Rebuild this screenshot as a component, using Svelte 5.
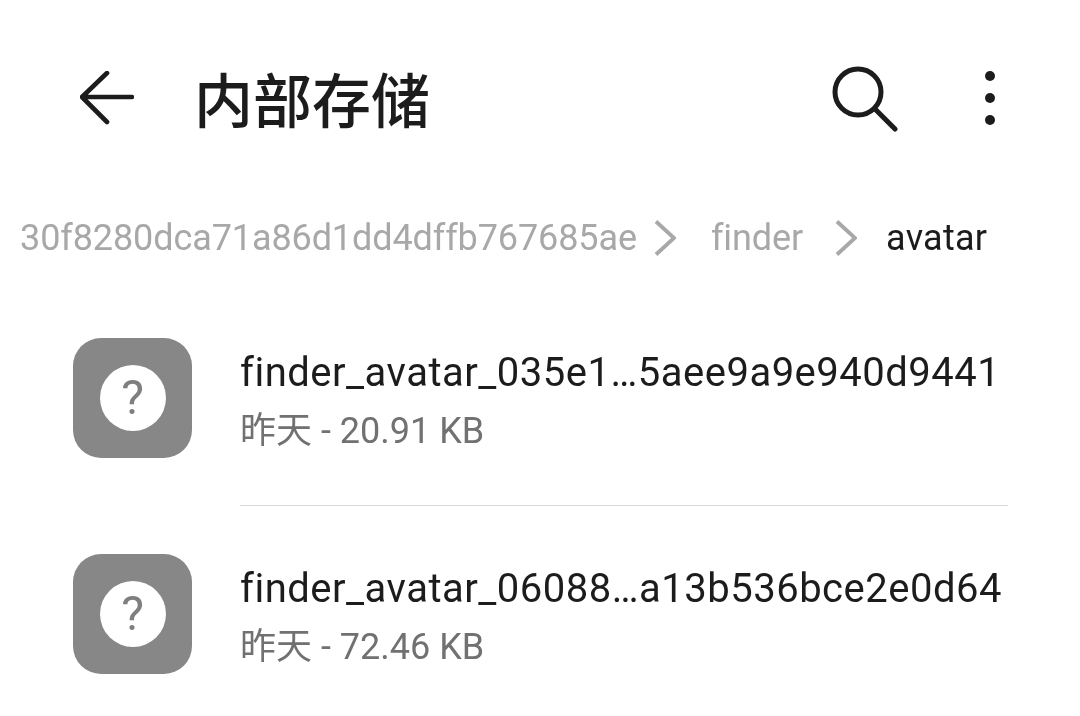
<script>
  const crumbs = [
    { label: "30f8280dca71a86d1dd4dffb767685ae", before: 17, after: 35 },
    { label: "finder", before: 32, after: 29 },
  ];
  const files = [
    { name: "finder_avatar_035e1…5aee9a9e940d9441", meta: "昨天 - 20.91 KB" },
    { name: "finder_avatar_06088…a13b536bce2e0d64", meta: "昨天 - 72.46 KB" },
  ];
</script>

<div class="screen">
  <header class="toolbar">
    <svg class="back" width="54" height="54" viewBox="0 0 54 54" fill="none" stroke="#1c1c1c" stroke-width="4.6" stroke-linecap="round" stroke-linejoin="round">
      <path d="M27 2 L2 26 L27 51 M2 26 H52" />
    </svg>
    <h1>内部存储</h1>
    <svg class="search" width="66" height="66" viewBox="0 0 66 66" fill="none" stroke="#1c1c1c" stroke-width="5" stroke-linecap="round">
      <circle cx="26" cy="26" r="23" />
      <path d="M43 43 L63 63" />
    </svg>
    <div class="more">
      <span></span>
      <span></span>
      <span></span>
    </div>
  </header>

  <nav class="crumbs">
    {#each crumbs as crumb}
      <span class="crumb">{crumb.label}</span>
      <svg style:margin-left="{crumb.before}px" style:margin-right="{crumb.after}px" width="22" height="36" viewBox="0 0 22 36" fill="none" stroke="#a8a8a8" stroke-width="3.8">
        <path d="M2 1.5 L20 18 L2 34.5" />
      </svg>
    {/each}
    <span class="crumb current">avatar</span>
  </nav>

  <ul class="files">
    {#each files as file, i}
      <li class="file">
        <div class="thumb">
          <div class="badge">?</div>
        </div>
        <div class="info" class:ruled={i < files.length - 1}>
          <div class="name">{file.name}</div>
          <div class="meta">{file.meta}</div>
        </div>
      </li>
    {/each}
  </ul>
</div>

<style>
  :global(body) {
    margin: 0;
    background: #fff;
  }
  .screen {
    width: 1080px;
    height: 716px;
    overflow: hidden;
    will-change: transform;
    background: #fff;
    font-family: Roboto, "Noto Sans CJK SC", sans-serif;
  }
  .toolbar {
    display: flex;
    align-items: center;
    height: 196px;
    box-sizing: border-box;
    padding-left: 80px;
    margin-bottom: 4px;
  }
  .back {
    margin-right: 60px;
  }
  h1 {
    margin: 0 0 2px;
    flex: 1;
    font-size: 59px;
    font-weight: 500;
    line-height: 1;
    color: #1c1c1c;
    font-family: "Noto Sans CJK SC", sans-serif;
  }
  .search {
    margin-right: 87px;
    margin-top: 1px;
  }
  .more {
    display: flex;
    flex-direction: column;
    gap: 12px;
    margin-right: 85px;
  }
  .more span {
    width: 10px;
    height: 10px;
    border-radius: 50%;
    background: #1c1c1c;
  }
  .crumbs {
    display: flex;
    align-items: center;
    height: 76px;
    padding-left: 20px;
    font-size: 36px;
    letter-spacing: -0.1px;
    white-space: nowrap;
  }
  .crumb {
    color: #a8a8a8;
  }
  .crumb.current {
    color: #1c1c1c;
    letter-spacing: 0.25px;
  }
  .files {
    list-style: none;
    margin: 0;
    padding: 0;
  }
  .file {
    display: flex;
    padding-left: 73px;
    height: 216px;
    box-sizing: border-box;
    padding-top: 62px;
  }
  .thumb {
    display: flex;
    align-items: center;
    justify-content: center;
    width: 119px;
    height: 120px;
    border-radius: 28px;
    background: #878787;
    flex-shrink: 0;
  }
  .badge {
    width: 66px;
    height: 66px;
    border-radius: 50%;
    background: #fff;
    color: #7f7f7f;
    font-size: 48px;
    line-height: 66px;
    text-align: center;
  }
  .info {
    margin-left: 48px;
    width: 768px;
  }
  .ruled {
    position: relative;
  }
  .ruled::after {
    content: "";
    position: absolute;
    left: 0;
    right: 0;
    top: 167px;
    height: 1px;
    background: #d9d9d9;
  }
  .name {
    font-size: 40px;
    letter-spacing: 0.5px;
    line-height: 70px;
    margin-bottom: -2px;
    color: #1c1c1c;
    white-space: nowrap;
  }
  .meta {
    font-size: 36px;
    line-height: 50px;
    color: #717171;
  }
</style>
